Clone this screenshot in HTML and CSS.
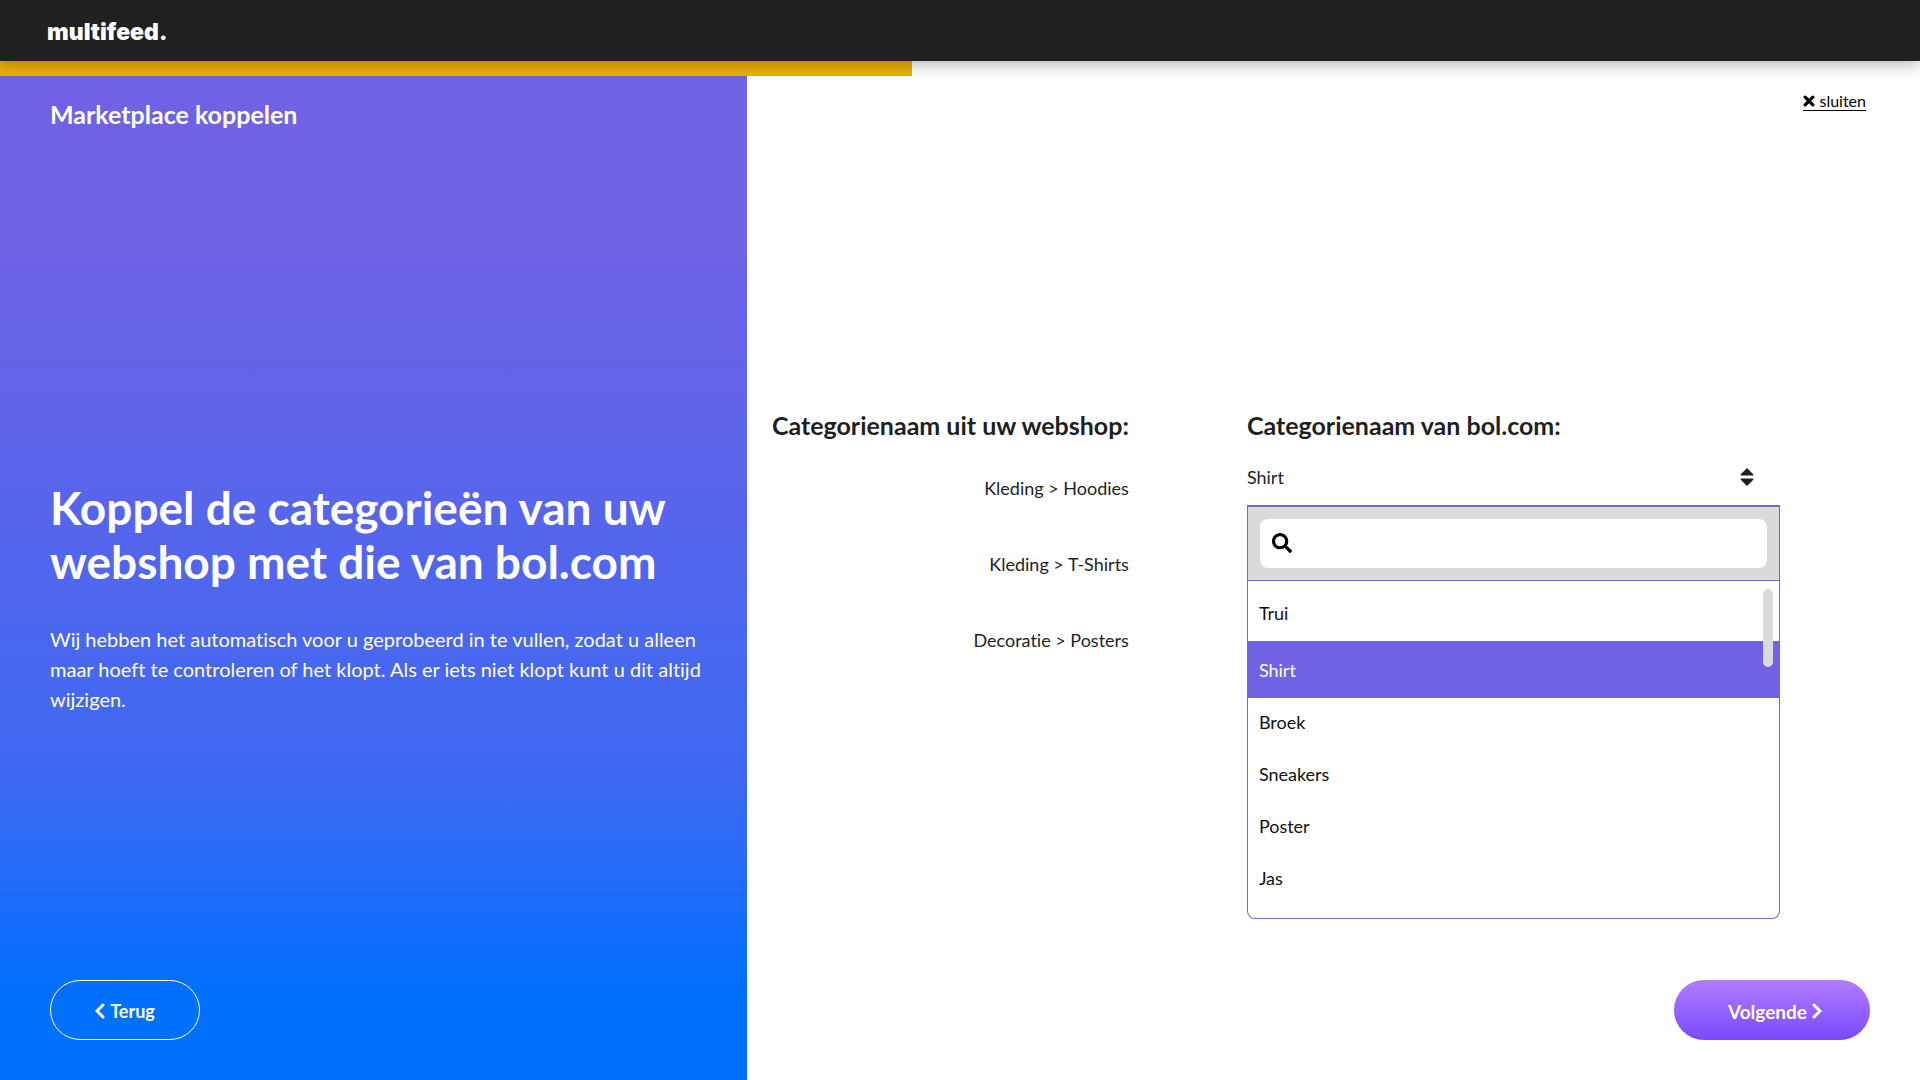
FILE: index.html
```html
<!DOCTYPE html>
<html lang="nl">
<head>
<meta charset="utf-8">
<meta name="viewport" content="width=device-width, initial-scale=1">
<title>multifeed.</title>
<link rel="stylesheet" href="styles.css">
</head>
<body>
<header class="topbar"><a class="logo" href="#">multifeed.</a></header>
<div class="progress"><div class="progress-bar"></div></div>
<main class="wizard">
  <section class="intro">
    <h2 class="intro-step">Marketplace koppelen</h2>
    <div class="intro-body">
      <h1 class="intro-title">Koppel de categorieën van uw webshop met die van bol.com</h1>
      <p class="intro-text">Wij hebben het automatisch voor u geprobeerd in te vullen, zodat u alleen maar hoeft te controleren of het klopt. Als er iets niet klopt kunt u dit altijd wijzigen.</p>
    </div>
    <button class="btn btn-back" type="button">
      <svg class="chevron" viewBox="0 0 10 16" aria-hidden="true"><path d="M8 2 2 8l6 6"/></svg>
      <span>Terug</span>
    </button>
  </section>
  <section class="content">
    <a class="close" href="#">
      <svg class="close-icon" viewBox="0 0 11 11" aria-hidden="true"><path d="M2 2l7 7M9 2l-7 7"/></svg>
      <span>sluiten</span>
    </a>
    <div class="mapping">
      <div class="source">
        <h3 class="column-title">Categorienaam uit uw webshop:</h3>
        <ul class="source-list">
          <li>Kleding &gt; Hoodies</li>
          <li>Kleding &gt; T-Shirts</li>
          <li>Decoratie &gt; Posters</li>
        </ul>
      </div>
      <div class="target">
        <h3 class="column-title"><label for="category">Categorienaam van bol.com:</label></h3>
        <div class="picker">
          <select class="picker-select" id="category">
            <option>Shirt</option>
          </select>
          <svg class="sort-icon" viewBox="0 0 14 18" aria-hidden="true"><path d="M7 0 13 6Q14 7 13 7.500H1Q0 7 1 6ZM7 18 13 12Q14 11 13 10.500H1Q0 11 1 12Z"/></svg>
          <div class="menu">
            <div class="menu-search">
              <label class="search">
                <svg class="search-icon" viewBox="0 0 512 512" role="img" aria-label="Zoeken"><path d="M505 442.700 405.300 343c-4.500-4.500-10.600-7-17-7H372c27.600-35.300 44-79.700 44-128C416 93.100 322.900 0 208 0S0 93.100 0 208s93.100 208 208 208c48.300 0 92.700-16.400 128-44v16.300c0 6.400 2.500 12.500 7 17l99.700 99.700c9.400 9.400 24.600 9.400 33.900 0l28.300-28.300c9.400-9.400 9.400-24.600.1-34zM208 336c-70.700 0-128-57.200-128-128 0-70.700 57.200-128 128-128 70.700 0 128 57.200 128 128 0 70.700-57.200 128-128 128z"/></svg>
                <input class="search-input" type="text">
              </label>
            </div>
            <ul class="options" role="listbox">
              <li class="option" role="option">Trui</li>
              <li class="option option-selected" role="option" aria-selected="true">Shirt</li>
              <li class="option" role="option">Broek</li>
              <li class="option" role="option">Sneakers</li>
              <li class="option" role="option">Poster</li>
              <li class="option" role="option">Jas</li>
            </ul>
            <span class="scroll-thumb"></span>
          </div>
        </div>
      </div>
    </div>
    <button class="btn btn-next" type="button">
      <span>Volgende</span>
      <svg class="chevron" viewBox="0 0 10 16" aria-hidden="true"><path d="m2 2 6 6-6 6"/></svg>
    </button>
  </section>
</main>
</body>
</html>
```
FILE: styles.css
```css
* { box-sizing: border-box; }

body {
  margin: 0;
  min-height: 100vh;
  display: flex;
  flex-direction: column;
  font-family: Lato, "Liberation Sans", sans-serif;
  font-size: 18px;
  font-variant-ligatures: none;
  line-height: 24px;
  color: #1f1f1f;
  background: #fff;
}

h1, h2, h3, p, ul { margin: 0; padding: 0; }
ul { list-style: none; }

.topbar {
  position: relative;
  z-index: 1;
  display: flex;
  align-items: center;
  padding: 20px 47px 17px;
  background: #202020;
  box-shadow: 0 3px 15px rgba(0, 0, 0, 0.3);
}

.logo {
  color: #fff;
  font-family: Inter, Lato, sans-serif;
  font-size: 23px;
  font-weight: 900;
  text-decoration: none;
}

.progress-bar {
  width: 47.5%;
  height: 15px;
  background: #edb009;
}

.wizard {
  flex: 1;
  display: grid;
  grid-template-columns: 38.9% 1fr;
}

.intro {
  display: flex;
  flex-direction: column;
  justify-content: space-between;
  align-items: flex-start;
  padding: 24px 40px 40px 50px;
  color: #fff;
  background: linear-gradient(180deg, #7062e5 0%, #7062e5 16%, #3d68f2 70%, #0070ff 92%);
}

.intro-body { margin-top: 86px; }
.intro-step { font-size: 25px; line-height: 28px; }
.intro-title { font-size: 46px; line-height: 54px; }

.intro-text {
  margin-top: 35px;
  font-size: 20px;
  line-height: 30px;
}

.btn {
  display: flex;
  align-items: center;
  justify-content: center;
  gap: 5px;
  height: 60px;
  padding: 2px 0 0;
  border: 0;
  border-radius: 30px;
  color: #fff;
  font-family: inherit;
  font-size: 18px;
  font-weight: 700;
}

.btn-back {
  width: 150px;
  border: 1px solid #fff;
  background: transparent;
}

.btn-next {
  width: 196px;
  padding-left: 6px;
  font-size: 19px;
  background: linear-gradient(180deg, #b07dff, #7a49ff);
}

.chevron {
  width: 10px;
  height: 16px;
  fill: none;
  stroke: currentColor;
  stroke-width: 3;
  stroke-linecap: round;
}

.content {
  display: flex;
  flex-direction: column;
  justify-content: space-between;
  align-items: flex-end;
  padding: 16px 50px 40px 24px;
}

.close {
  display: flex;
  align-items: center;
  gap: 4px;
  margin-right: 4px;
  border-bottom: 1px solid #000;
  color: #000;
  font-size: 16px;
  line-height: 18px;
  text-decoration: none;
}

.close-icon {
  width: 12px;
  height: 12px;
  fill: none;
  stroke: currentColor;
  stroke-width: 3;
  stroke-linecap: round;
}

.mapping {
  width: 100%;
  display: grid;
  grid-template-columns: 358px 1fr;
  gap: 118px;
  margin-bottom: 30px;
  padding-right: 90px;
}

.column-title {
  font-size: 25px;
  line-height: 30px;
  white-space: nowrap;
}

.source { text-align: right; }

.source-list {
  display: grid;
  gap: 52px;
  margin-top: 36px;
}

.picker {
  position: relative;
  margin-top: 14px;
}

.picker-select {
  display: block;
  width: 100%;
  height: 53px;
  padding: 0 0 4px;
  border: 0;
  border-bottom: 2px solid #7468c4;
  appearance: none;
  background: transparent;
  color: inherit;
  font: inherit;
}

.sort-icon {
  position: absolute;
  top: 14px;
  right: 26px;
  width: 14px;
  height: 18px;
  fill: #1f1f1f;
}

.menu {
  position: absolute;
  top: 100%;
  left: 0;
  right: 0;
  overflow: hidden;
  border: 1px solid #7468c4;
  border-top: 0;
  border-radius: 0 0 8px 8px;
  background: #fff;
}

.menu-search {
  padding: 12px;
  border-bottom: 1px solid #7468c4;
  background: #dadada;
}

.search {
  display: flex;
  align-items: center;
  gap: 12px;
  height: 49px;
  padding: 0 12px;
  border-radius: 8px;
  background: #fff;
}

.search-icon {
  width: 20px;
  height: 20px;
  fill: #000;
}

.search-input {
  flex: 1;
  border: 0;
  outline: 0;
  background: transparent;
  font: inherit;
}

.options { padding: 8px 0 12px; }

.option {
  padding: 12px 11px 16px;
  color: #111;
}

.option-selected {
  padding: 17px 11px 16px;
  color: #fff;
  background: #7062e5;
}

.scroll-thumb {
  position: absolute;
  top: 82px;
  right: 6px;
  width: 10px;
  height: 78px;
  border-radius: 5px;
  background: #dadada;
}
```
